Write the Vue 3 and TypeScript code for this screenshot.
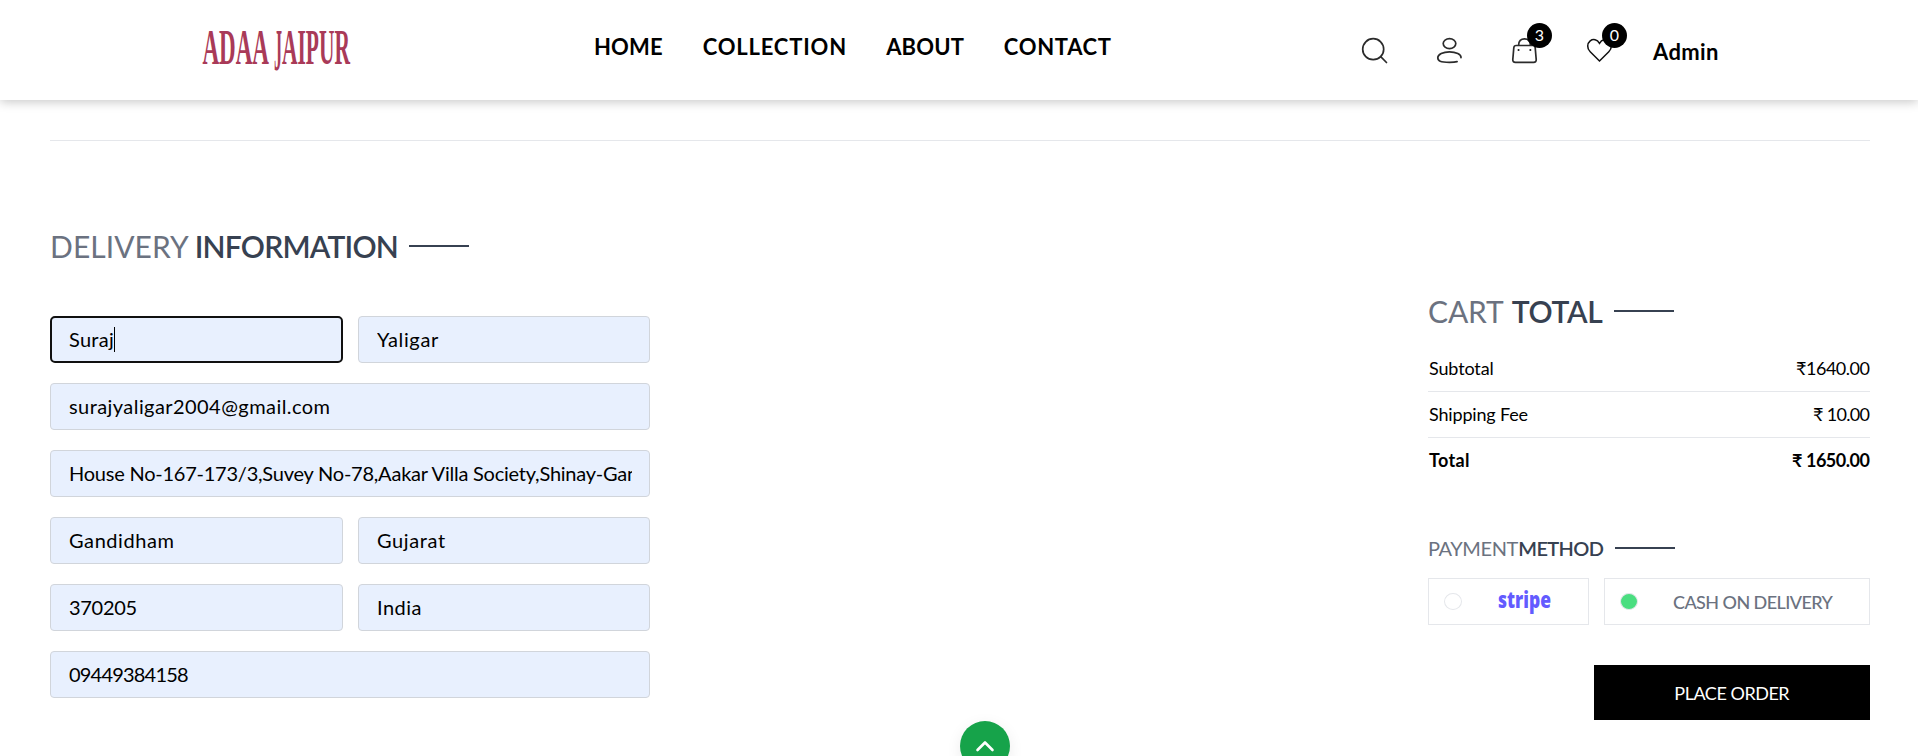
<script setup lang="ts">
import { ref, type Directive } from 'vue'

interface Fit { width: number; sample?: string }
interface Field { value: string; fit: Fit; wide?: boolean; active?: boolean }

const ctx = document.createElement('canvas').getContext('2d')!

// Tracks a label so that its ink spans the given width.
const vFit: Directive<HTMLElement, number | Fit> = {
  mounted(el, { value }) {
    const fit: Fit = typeof value === 'number' ? { width: value } : value
    const isInput = el instanceof HTMLInputElement
    const text = fit.sample ?? (isInput ? el.value : el.textContent ?? '').trim()
    const css = getComputedStyle(el)
    ctx.font = `${css.fontWeight} ${css.fontSize} ${css.fontFamily}`
    const m = ctx.measureText(text)
    const ink = m.actualBoundingBoxRight + m.actualBoundingBoxLeft
    const gap = (fit.width - ink) / Math.max(1, text.length - 1)
    el.style.letterSpacing = `${gap}px`
    if (!isInput) el.style.marginRight = `${-gap}px`
  },
}

const nav = [
  { label: 'HOME', width: 67 },
  { label: 'COLLECTION', width: 142.5 },
  { label: 'ABOUT', width: 78.5 },
  { label: 'CONTACT', width: 107 },
]

const fields = ref<Field[]>([
  { value: 'Suraj', fit: { width: 44 }, active: true },
  { value: 'Yaligar', fit: { width: 62 } },
  { value: 'surajyaligar2004@gmail.com', fit: { width: 260.5 }, wide: true },
  {
    value: 'House No-167-173/3,Suvey No-78,Aakar Villa Society,Shinay-Gandhidham',
    fit: { width: 558, sample: 'House No-167-173/3,Suvey No-78,Aakar Villa Society,Shinay-Ga' },
    wide: true,
  },
  { value: 'Gandidham', fit: { width: 104.5 } },
  { value: 'Gujarat', fit: { width: 68 } },
  { value: '370205', fit: { width: 67.5 } },
  { value: 'India', fit: { width: 42.5 } },
  { value: '09449384158', fit: { width: 119 }, wide: true },
])

const totals = [
  { label: 'Subtotal', lw: 63.5, value: '₹1640.00', vw: 72.5 },
  { label: 'Shipping Fee', lw: 98.5, value: '₹ 10.00', vw: 55.5 },
  { label: 'Total', lw: 40, value: '₹ 1650.00', vw: 77.5, bold: true },
]
</script>

<template>
  <div class="page">
    <header class="header">
      <svg class="logo" width="150" height="46" viewBox="202 28 150 46">
        <text x="202.5" y="63.5" font-size="51.5" textLength="66.5" lengthAdjust="spacingAndGlyphs">ADAA</text>
        <text x="274" y="70" font-size="60" textLength="8" lengthAdjust="spacingAndGlyphs">J</text>
        <text x="282" y="63.5" font-size="51.5" textLength="68" lengthAdjust="spacingAndGlyphs">AIPUR</text>
      </svg>
      <nav class="nav">
        <a v-for="n in nav" :key="n.label" v-fit="n.width">{{ n.label }}</a>
      </nav>
      <div class="actions">
        <svg class="icon" viewBox="0 0 25 25"><circle cx="11.2" cy="11.2" r="10.5" /><path d="M18.7 18.7 24.5 24.5" /></svg>
        <svg class="icon" viewBox="0 0 25 25">
          <ellipse cx="12.5" cy="5.6" rx="6.3" ry="5" />
          <path d="M24 19.6C24.3 16.6 19 13.8 12.5 13.8S.8 16.6.8 19.8s2.4 4.5 11.7 4.5c3.3 0 5.8-.2 7.6-.7" />
        </svg>
        <div class="with-badge">
          <svg class="icon" viewBox="0 0 25 25">
            <path d="M4.2 7.5h16.6q2.2 0 2.4 2.2l1 11.8q.2 2.8-2.6 2.8H3.4Q.6 24.3.8 21.5l1-11.8q.2-2.2 2.4-2.2ZM6.6 7.2C6.6 3 9 .8 12.5.8s5.9 2.2 5.9 6.4" />
            <path class="dot" d="M6.5 12h.1M18.3 12h.1" />
          </svg>
          <span class="badge">3</span>
        </div>
        <div class="with-badge">
          <svg class="icon heart" viewBox="0 0 25 25">
            <path d="M12.5 23 3.2 13.8C-.4 10.2.2 5.4 3.2 2.9c3-2.3 7-1.5 9.3 2.4 2.3-3.9 6.3-4.7 9.3-2.4 3 2.5 3.6 7.3 0 10.9Z" />
          </svg>
          <span class="badge">0</span>
        </div>
        <span v-fit="66" class="admin">Admin</span>
      </div>
    </header>

    <main class="main">
      <section class="delivery">
        <h2 class="title">
          <span v-fit="137" class="light">DELIVERY</span>
          <span v-fit="200" class="strong">INFORMATION</span>
          <i class="rule" />
        </h2>
        <form class="form" @submit.prevent>
          <div v-for="(f, i) in fields" :key="i" class="field" :class="{ wide: f.wide, active: f.active }">
            <input v-model="f.value" v-fit="f.fit" type="text">
            <i v-if="f.active" class="caret" />
          </div>
        </form>
      </section>

      <section class="summary">
        <h2 class="title cart">
          <span v-fit="75" class="light">CART</span>
          <span v-fit="91.5" class="strong">TOTAL</span>
          <i class="rule" />
        </h2>
        <div v-for="t in totals" :key="t.label" class="row" :class="{ bold: t.bold }">
          <span v-fit="t.lw">{{ t.label }}</span>
          <span v-fit="t.vw">{{ t.value }}</span>
        </div>
        <h3 class="title small">
          <span v-fit="89.5" class="light">PAYMENT</span>
          <span v-fit="84.5" class="strong">METHOD</span>
          <i class="rule" />
        </h3>
        <div class="methods">
          <div class="method stripe">
            <i class="radio" />
            <svg class="brand" width="54" height="26" viewBox="0 0 54 26">
              <text x="0" y="19" textLength="53" lengthAdjust="spacingAndGlyphs">stripe</text>
            </svg>
          </div>
          <div class="method cash">
            <i class="radio on" />
            <span v-fit="160.5" class="cod">CASH ON DELIVERY</span>
          </div>
        </div>
        <button class="place"><span v-fit="115">PLACE ORDER</span></button>
      </section>
    </main>

    <button class="to-top" aria-label="Back to top">
      <svg width="20" height="14" viewBox="0 0 20 14"><path d="M2.5 11 10 3.5 17.5 11" /></svg>
    </button>
  </div>
</template>

<style>
body { margin: 0; overflow: hidden; background: #fff; }
</style>

<style scoped>
.page {
  position: relative;
  height: 756px;
  overflow: hidden;
  font-family: Lato, "Liberation Sans", sans-serif;
  color: #000;
}
.page * { box-sizing: border-box; }
.header {
  height: 100px;
  padding-left: 202px;
  display: grid;
  grid-template-columns: 391px 767px auto;
  align-items: start;
  background: #fff;
  box-shadow: 0 2px 10px rgba(0, 0, 0, .22);
}
.logo { margin-top: 28px; overflow: visible; }
.logo text { font-family: "Liberation Serif", serif; font-weight: 700; fill: #a93a58; }
.nav { display: flex; gap: 40px; padding: 34px 0 0 1px; }
.nav a { font-size: 22px; font-weight: 700; line-height: 26px; white-space: nowrap; }
.actions { display: flex; padding: 38px 0 0 2px; gap: 50px; }
.icon { display: block; width: 25px; height: 25px; fill: none; stroke: #2b2b2b; stroke-width: 1.7; stroke-linecap: round; overflow: visible; }
.icon .dot { stroke-width: 2; stroke: #222; }
.icon.heart { stroke: #111; stroke-width: 1.5; }
.with-badge { position: relative; }
.badge {
  position: absolute;
  left: 15px;
  top: -15px;
  width: 25px;
  height: 25px;
  border-radius: 50%;
  background: #000;
  color: #fff;
  font-size: 16px;
  line-height: 24px;
  text-align: center;
}
.admin { margin-left: -9px; padding-top: 1px; font-size: 22px; font-weight: 700; line-height: 26px; }

.main {
  margin: 40px 48px 0 50px;
  border-top: 1px solid #e5e7eb;
  display: flex;
  justify-content: space-between;
}
.title { display: flex; align-items: center; margin: 0; font-size: 30px; font-weight: 400; line-height: 36px; white-space: nowrap; }
.light { color: #6b7280; }
.strong { color: #374151; font-weight: 600; }
.rule { width: 60px; height: 2px; background: #374151; }
.delivery { width: 600px; padding-top: 87px; }
.delivery .strong { padding-left: 6px; }
.delivery .rule { margin-left: 10px; }
.form { display: grid; grid-template-columns: 293px 292px; gap: 20px 15px; margin-top: 52px; }
.field { position: relative; height: 47px; }
.field.wide { grid-column: 1 / 3; }
.field input {
  display: block;
  width: 100%;
  height: 47px;
  padding: 0 17px 2px 18px;
  border: 1px solid #d1d5db;
  border-radius: 4px;
  background: #e8f0fe;
  font: 400 20px/30px Lato, "Liberation Sans", sans-serif;
  color: #000;
  outline: none;
}
.field.active input { border: 2px solid #101010; border-radius: 5px; padding: 0 16px 2px 17px; }
.caret { position: absolute; left: 64px; top: 11px; width: 1px; height: 25px; background: #000; }

.summary { width: 442px; padding-top: 152px; display: flex; flex-direction: column; }
.cart .strong { padding-left: 8px; }
.cart .rule { margin-left: 11px; }
.row {
  display: flex;
  justify-content: space-between;
  height: 46px;
  padding: 9px 0 0 1px;
  border-bottom: 1px solid #e5e7eb;
  font-size: 18px;
  line-height: 27px;
  white-space: pre;
}
.cart + .row { margin-top: 17px; }
.row.bold { font-weight: 700; border-bottom: 0; }
.small { margin-top: 52px; font-size: 20px; line-height: 24px; }
.small .rule { margin-left: 11px; }
.methods { display: flex; gap: 15px; margin-top: 18px; }
.method { display: flex; align-items: center; height: 47px; padding-left: 15px; border: 1px solid #e5e7eb; }
.stripe { width: 161px; }
.cash { width: 266px; }
.radio { width: 18px; height: 17px; border: 1px solid #e5e7eb; border-radius: 50%; }
.radio.on { background: #4ade80; }
.brand { margin-left: 36px; overflow: visible; }
.brand text { font: 800 23px "Open Sans", sans-serif; fill: #635bff; }
.cod { margin-left: 35px; font-size: 18px; font-weight: 500; color: #6b7280; white-space: nowrap; }
.place {
  align-self: flex-end;
  width: 276px;
  height: 55px;
  margin-top: 40px;
  border: 0;
  background: #000;
  color: #fff;
  font: 400 18px/24px Lato, "Liberation Sans", sans-serif;
}
.place span { display: inline-block; }
.to-top {
  position: absolute;
  left: 960px;
  top: 721px;
  display: flex;
  justify-content: center;
  align-items: flex-start;
  width: 50px;
  height: 50px;
  padding: 18px 0 0;
  border: 0;
  border-radius: 50%;
  background: #16a34a;
  box-shadow: 0 4px 15px rgba(0, 0, 0, .08);
}
.to-top svg { fill: none; stroke: #fff; stroke-width: 2.6; stroke-linecap: round; stroke-linejoin: round; }
</style>
